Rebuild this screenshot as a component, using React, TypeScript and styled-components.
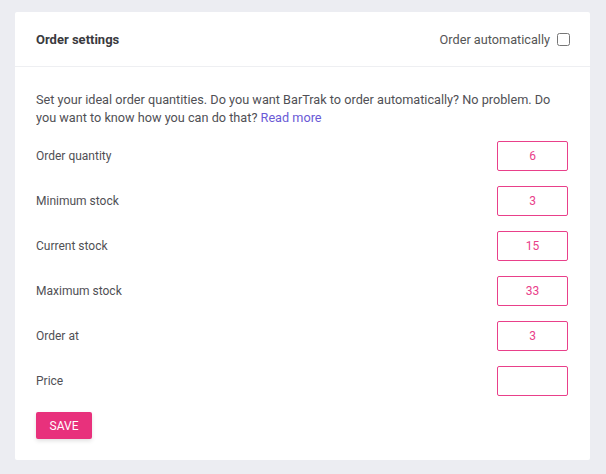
import React from "react";
import styled, { createGlobalStyle } from "styled-components";

const GlobalStyle = createGlobalStyle`
  html, body {
    margin: 0;
    padding: 0;
    background: #ecedf2;
    font-family: Roboto, "Liberation Sans", Arial, sans-serif;
  }
`;

const Page = styled.div`
  padding: 12px 16px 14px 15px;
`;

const Card = styled.section`
  background: #ffffff;
  border-radius: 2px;
  width: 575px;
`;

const Header = styled.header`
  height: 55px;
  box-sizing: border-box;
  padding: 0 20px 0 21px;
  display: flex;
  align-items: center;
  justify-content: space-between;
  border-bottom: 1px solid #eeeff2;
`;

const Title = styled.h2`
  margin: 0;
  font-size: 13px;
  font-weight: 700;
  color: #3a3a3e;
`;

const AutoLabel = styled.label`
  display: flex;
  align-items: center;
  gap: 7px;
  font-size: 12.7px;
  color: #555;
`;

const Check = styled.input`
  margin: 0;
  width: 13px;
  height: 13px;
`;

const Body = styled.div`
  padding: 24px 22px 21px 21px;
`;

const Intro = styled.p`
  margin: 0 0 14px;
  font-size: 12.7px;
  line-height: 18px;
  color: #505055;
`;

const Link = styled.a`
  color: #6a5ad6;
  text-decoration: none;
`;

const Fields = styled.div`
  display: flex;
  flex-direction: column;
  gap: 15px;
`;

const Row = styled.div`
  display: flex;
  align-items: center;
  justify-content: space-between;
`;

const Label = styled.span`
  font-size: 12px;
  color: #505055;
`;

const NumberBox = styled.input`
  width: 71px;
  height: 30px;
  box-sizing: border-box;
  border: 1px solid #e9408a;
  border-radius: 2px;
  text-align: center;
  font-family: inherit;
  font-size: 12px;
  color: #e9408a;
  outline: none;
`;

const SaveButton = styled.button`
  margin-top: 16px;
  width: 56px;
  height: 27px;
  border: none;
  border-radius: 2px;
  background: #e8317c;
  color: #fff;
  font-family: inherit;
  font-size: 12px;
  box-shadow: 0 2px 4px rgba(0, 0, 0, 0.12);
  cursor: pointer;
`;

const fields = [
  { label: "Order quantity", value: "6" },
  { label: "Minimum stock", value: "3" },
  { label: "Current stock", value: "15" },
  { label: "Maximum stock", value: "33" },
  { label: "Order at", value: "3" },
  { label: "Price", value: "" },
];

export default function App() {
  return (
    <>
      <GlobalStyle />
      <Page>
        <Card>
          <Header>
            <Title>Order settings</Title>
            <AutoLabel>
              Order automatically
              <Check type="checkbox" />
            </AutoLabel>
          </Header>
          <Body>
            <Intro>
              Set your ideal order quantities. Do you want BarTrak to order automatically? No problem. Do
              you want to know how you can do that? <Link href="#">Read more</Link>
            </Intro>
            <Fields>
              {fields.map((f) => (
                <Row key={f.label}>
                  <Label>{f.label}</Label>
                  <NumberBox defaultValue={f.value} />
                </Row>
              ))}
            </Fields>
            <SaveButton>SAVE</SaveButton>
          </Body>
        </Card>
      </Page>
    </>
  );
}
